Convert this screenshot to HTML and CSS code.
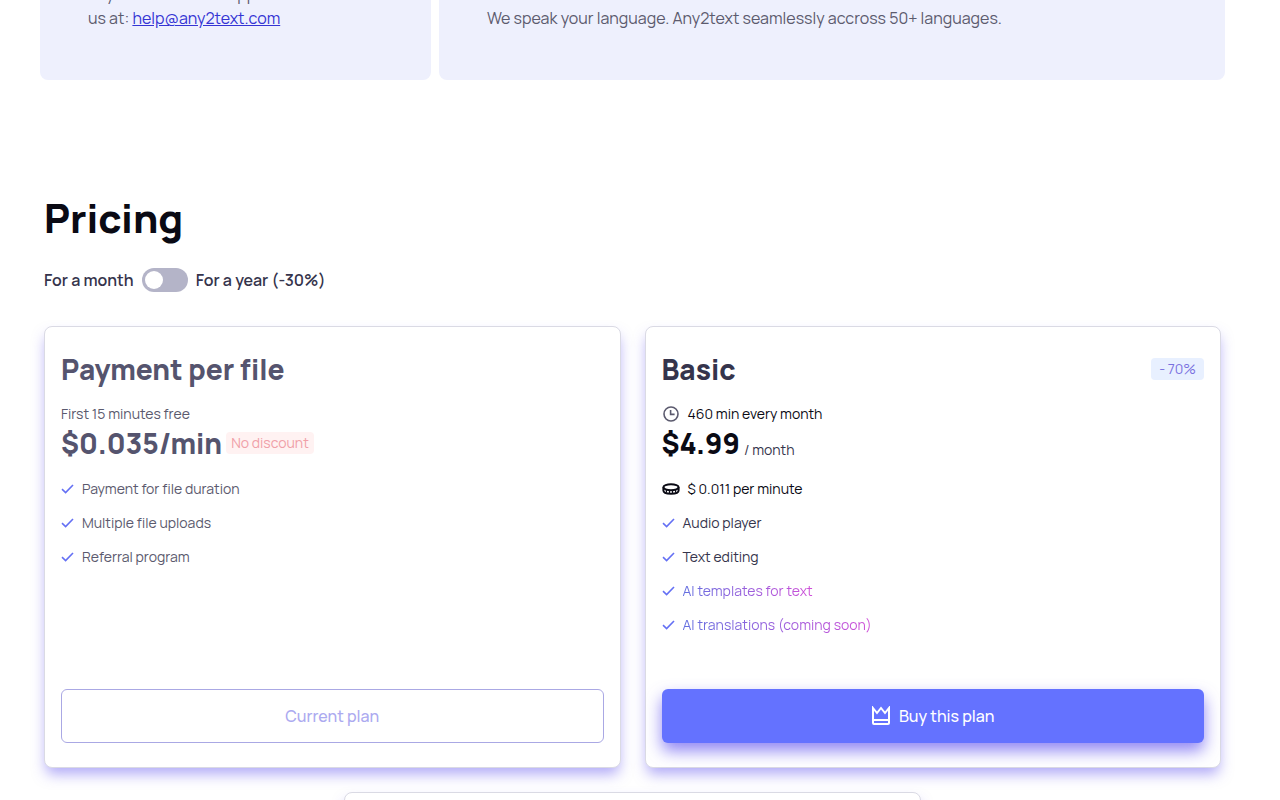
FILE: index.html
```html
<!DOCTYPE html>
<html lang="en">
<head>
    <meta charset="UTF-8">
    <meta name="viewport" content="width=device-width, initial-scale=1.0">
    <title>Any2text - Pricing</title>
    <link rel="stylesheet" href="styles.css">
</head>
<body>
    <svg class="sprite" aria-hidden="true">
        <symbol id="check" viewBox="0 0 13 10">
            <path d="M1 5.2 4.6 8.6 12 1" fill="none" stroke="currentColor" stroke-width="1.6"/>
        </symbol>
    </svg>

    <div class="features">
        <div class="feature">
            <p>any time from our support<br>us at: <a href="mailto:help@any2text.com">help@any2text.com</a></p>
        </div>
        <div class="feature">
            <p>We speak your language. Any2text seamlessly accross 50+ languages.</p>
        </div>
    </div>

    <main class="pricing">
        <h1>Pricing</h1>

        <div class="period">
            <span>For a month</span>
            <input type="checkbox" id="period" class="switch" aria-label="Pay for a year">
            <label for="period">For a year (-30%)</label>
        </div>

        <div class="plans">
            <section class="plan plan-current">
                <div class="plan-head">
                    <h2>Payment per file</h2>
                </div>
                <div class="limit">First 15 minutes free</div>
                <div class="price">
                    <strong>$0.035/min</strong>
                    <span class="no-discount">No discount</span>
                </div>
                <ul>
                    <li><svg class="check"><use href="#check"/></svg>Payment for file duration</li>
                    <li><svg class="check"><use href="#check"/></svg>Multiple file uploads</li>
                    <li><svg class="check"><use href="#check"/></svg>Referral program</li>
                </ul>
                <button class="btn btn-outline" disabled>Current plan</button>
            </section>

            <section class="plan">
                <div class="plan-head">
                    <h2>Basic</h2>
                    <span class="discount">- 70%</span>
                </div>
                <div class="limit dark">
                    <svg class="icon clock" viewBox="0 0 18 18" fill="none" stroke="currentColor" stroke-width="1.6">
                        <circle cx="9" cy="9" r="7"/>
                        <path d="M8.6 5v4.4h4"/>
                    </svg>
                    460 min every month
                </div>
                <div class="price dark">
                    <strong>$4.99</strong>
                    <span class="per">/ month</span>
                </div>
                <ul>
                    <li class="dark">
                        <svg class="icon" viewBox="0 0 18 18" fill="none" stroke="currentColor" stroke-width="2">
                            <ellipse cx="9" cy="7.2" rx="7.6" ry="3"/>
                            <path d="M1.4 7.2v3.4c0 2 3.4 3.2 7.6 3.2s7.6-1.2 7.6-3.2V7.2"/>
                            <path d="M4.4 9.6v3.2M7.500 10.2v3.400M10.500 10.2v3.400M13.6 9.6v3.2" stroke-width="1.2"/>
                        </svg>
                        $ 0.011 per minute
                    </li>
                    <li><svg class="check"><use href="#check"/></svg>Audio player</li>
                    <li><svg class="check"><use href="#check"/></svg>Text editing</li>
                    <li><svg class="check"><use href="#check"/></svg><span class="ai">AI templates for text</span></li>
                    <li><svg class="check"><use href="#check"/></svg><span class="ai">AI translations (coming soon)</span></li>
                </ul>
                <button class="btn btn-primary">
                    <svg class="crown" viewBox="0 0 20 20" fill="none" stroke="currentColor" stroke-width="2">
                        <path d="M2 2l4 5 4-5 4 5 4-5v15a1 1 0 0 1-1 1H3a1 1 0 0 1-1-1zM2 14h16"/>
                    </svg>
                    Buy this plan
                </button>
            </section>

            <section class="plan"></section>
        </div>
    </main>
</body>
</html>
```

FILE: styles.css
```css
* {
    box-sizing: border-box;
}

body {
    font-family: Manrope, Inter, sans-serif;
    font-size: 16px;
    line-height: 24px;
    color: #35344c;
    background-color: #fff;
    margin: 0;
    padding: 0 55px 0 40px;
}

h1, h2, p, ul {
    margin: 0;
    padding: 0;
}

.sprite {
    display: none;
}

.features {
    display: grid;
    grid-template-columns: 391fr 786fr;
    gap: 8px;
    height: 80px;
}

.feature {
    display: flex;
    align-items: flex-end;
    overflow: hidden;
    padding: 0 48px 50px;
    background-color: #eef0fd;
    border-radius: 0 0 8px 8px;
    color: #5c5b6e;
}

.feature a {
    color: #3434d4;
}

.pricing {
    padding: 110px 4px 0;
}

h1 {
    font-size: 40px;
    line-height: 56px;
    font-weight: 800;
    color: #0a0a14;
}

.period {
    display: flex;
    align-items: center;
    gap: 8px;
    margin: 22px 0 34px;
    font-weight: 600;
}

.switch {
    appearance: none;
    width: 46px;
    height: 24px;
    margin: 0;
    padding: 3px;
    border-radius: 12px;
    background-color: #b4b4c8;
    cursor: pointer;
}

.switch::before {
    content: "";
    display: block;
    width: 18px;
    height: 18px;
    border-radius: 50%;
    background-color: #fff;
}

.switch:checked::before {
    margin-left: auto;
}

.plans {
    display: flex;
    flex-wrap: wrap;
    justify-content: center;
    gap: 24px;
}

.plan {
    display: flex;
    flex-direction: column;
    width: calc(50% - 12px);
    min-height: 442px;
    padding: 24px 16px;
    background-color: #fff;
    border: 1px solid #dadae4;
    border-radius: 8px;
    box-shadow: 0 8px 14px -2px rgba(98, 84, 240, 0.5);
    font-size: 14px;
    line-height: 22px;
}

.plan-current {
    color: #5b5a6e;
}

.plan-head {
    display: flex;
    justify-content: space-between;
    align-items: center;
    margin-bottom: 16px;
}

h2, .price strong {
    font-size: 28px;
    line-height: 36px;
    font-weight: 800;
}

.plan-current h2,
.plan-current strong {
    color: #55546e;
}

.discount {
    padding: 0 8px;
    border-radius: 4px;
    background-color: #e8f0ff;
    color: #7a70e0;
}

.limit {
    display: flex;
    align-items: center;
    gap: 8px;
}

.dark {
    color: #0a0a14;
}

.price {
    display: flex;
    align-items: center;
    gap: 4px;
    margin-bottom: 17px;
}

.no-discount {
    padding: 0 5px;
    border-radius: 4px;
    background-color: #fff2f2;
    color: #f0a0a8;
}

.per {
    padding-top: 14px;
    color: #35344c;
}

ul {
    display: flex;
    flex-direction: column;
    gap: 12px;
    list-style: none;
}

li {
    display: flex;
    align-items: center;
    gap: 8px;
}

.icon {
    width: 18px;
    height: 18px;
}

.clock {
    color: #5b5a6e;
}

.check {
    width: 13px;
    height: 10px;
    color: #6470f4;
}

.ai {
    background: linear-gradient(90deg, #6470e0, #d04fd8);
    background-clip: text;
    color: transparent;
}

.btn {
    display: flex;
    justify-content: center;
    align-items: center;
    gap: 8px;
    height: 54px;
    margin-top: auto;
    border: 0;
    border-radius: 6px;
    font-family: inherit;
    font-size: 16px;
    font-weight: 500;
}

.btn-outline {
    border: 1px solid #aaa8e4;
    background-color: #fff;
    color: #acaaf0;
}

.btn-primary {
    background-color: #6472ff;
    color: #fff;
    box-shadow: 0 8px 16px rgba(98, 84, 240, 0.7);
    cursor: pointer;
}

.crown {
    width: 20px;
    height: 20px;
}
```
